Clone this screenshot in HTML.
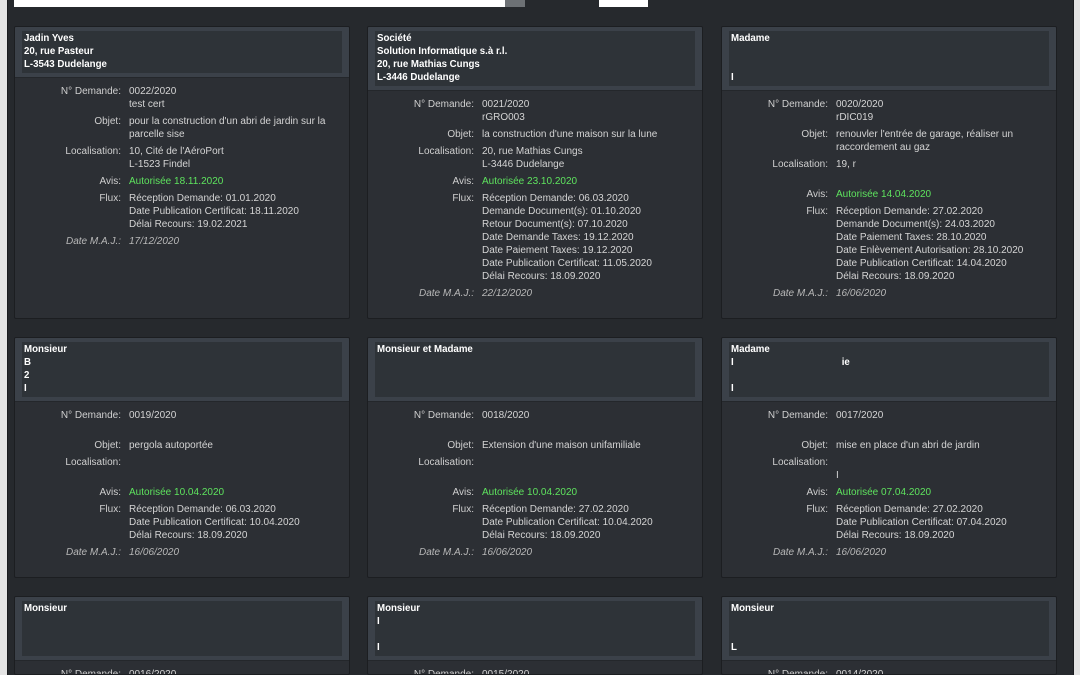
<!DOCTYPE html>
<html style="height:675px;overflow:hidden"><head><meta charset="utf-8"><style>
*{margin:0;padding:0;box-sizing:border-box}
body{width:1080px;height:675px;overflow:hidden;background:#26292d;font-family:"Liberation Sans",Arial,sans-serif;font-size:10px;color:#d0d0d0;position:relative}
.ls{position:absolute;left:0;top:0;width:8px;height:675px;background:#e4e4e4;border-right:1px solid #1a1c1f}
.rs{position:absolute;left:1073px;top:0;width:7px;height:675px;background:#e4e4e4;border-left:1px solid #1a1c1f}
.inp{position:absolute;left:14px;top:0;width:491px;height:7px;background:#fff}
.btn{position:absolute;left:505px;top:0;width:20px;height:7px;background:#6d7175}
.box{position:absolute;left:599px;top:0;width:49px;height:7px;background:#fff}
.card{position:absolute;width:336px;background:#2c2f34;border:1px solid #1c1e21;border-radius:2px;overflow:hidden}
.hd{background:#3b4149;padding:4px 7px 4px;border-bottom:1px solid #24272b}
.hi{background:#2e3338;padding:1px 2px 2px;line-height:13px;font-weight:bold;color:#fff;font-size:9.7px}
.bd{padding:7px 0 0 0}
.f{display:flex;line-height:13px;margin-bottom:4px}
.l{width:114px;text-align:right;padding-right:8px;color:#cfcfcf;flex:none}
.v{color:#d4d4d4}
.g{color:#5ee35e}
.i{font-style:italic;color:#b8b8b8}
</style></head><body>
<div class="ls"></div><div class="rs"></div>
<div class="inp"></div><div class="btn"></div><div class="box"></div>

<div class="card" style="left:14px;top:26px;height:293px">
<div class="hd"><div class="hi">Jadin Yves<br>20, rue Pasteur<br>L-3543 Dudelange</div></div>
<div class="bd">
<div class="f"><div class="l">N° Demande:</div><div class="v">0022/2020<br>test cert</div></div>
<div class="f"><div class="l">Objet:</div><div class="v">pour la construction d'un abri de jardin sur la<br>parcelle sise</div></div>
<div class="f"><div class="l">Localisation:</div><div class="v">10, Cité de l'AéroPort<br>L-1523 Findel</div></div>
<div class="f"><div class="l">Avis:</div><div class="v g">Autorisée 18.11.2020</div></div>
<div class="f"><div class="l">Flux:</div><div class="v">Réception Demande: 01.01.2020<br>Date Publication Certificat: 18.11.2020<br>Délai Recours: 19.02.2021</div></div>
<div class="f"><div class="l i">Date M.A.J.:</div><div class="v i">17/12/2020</div></div>
</div></div>

<div class="card" style="left:367px;top:26px;height:293px">
<div class="hd"><div class="hi">Société<br>Solution Informatique s.à r.l.<br>20, rue Mathias Cungs<br>L-3446 Dudelange</div></div>
<div class="bd">
<div class="f"><div class="l">N° Demande:</div><div class="v">0021/2020<br>rGRO003</div></div>
<div class="f"><div class="l">Objet:</div><div class="v">la construction d'une maison sur la lune</div></div>
<div class="f"><div class="l">Localisation:</div><div class="v">20, rue Mathias Cungs<br>L-3446 Dudelange</div></div>
<div class="f"><div class="l">Avis:</div><div class="v g">Autorisée 23.10.2020</div></div>
<div class="f"><div class="l">Flux:</div><div class="v">Réception Demande: 06.03.2020<br>Demande Document(s): 01.10.2020<br>Retour Document(s): 07.10.2020<br>Date Demande Taxes: 19.12.2020<br>Date Paiement Taxes: 19.12.2020<br>Date Publication Certificat: 11.05.2020<br>Délai Recours: 18.09.2020</div></div>
<div class="f"><div class="l i">Date M.A.J.:</div><div class="v i">22/12/2020</div></div>
</div></div>

<div class="card" style="left:721px;top:26px;height:293px">
<div class="hd"><div class="hi">Madame<br>&nbsp;<br>&nbsp;<br>I</div></div>
<div class="bd">
<div class="f"><div class="l">N° Demande:</div><div class="v">0020/2020<br>rDIC019</div></div>
<div class="f"><div class="l">Objet:</div><div class="v">renouvler l'entrée de garage, réaliser un<br>raccordement au gaz</div></div>
<div class="f"><div class="l">Localisation:</div><div class="v">19, r<br>&nbsp;</div></div>
<div class="f"><div class="l">Avis:</div><div class="v g">Autorisée 14.04.2020</div></div>
<div class="f"><div class="l">Flux:</div><div class="v">Réception Demande: 27.02.2020<br>Demande Document(s): 24.03.2020<br>Date Paiement Taxes: 28.10.2020<br>Date Enlèvement Autorisation: 28.10.2020<br>Date Publication Certificat: 14.04.2020<br>Délai Recours: 18.09.2020</div></div>
<div class="f"><div class="l i">Date M.A.J.:</div><div class="v i">16/06/2020</div></div>
</div></div>

<div class="card" style="left:14px;top:337px;height:241px">
<div class="hd"><div class="hi">Monsieur<br>B<br>2<br>I</div></div>
<div class="bd">
<div class="f"><div class="l">N° Demande:</div><div class="v">0019/2020<br>&nbsp;</div></div>
<div class="f"><div class="l">Objet:</div><div class="v">pergola autoportée</div></div>
<div class="f"><div class="l">Localisation:</div><div class="v">&nbsp;<br>&nbsp;</div></div>
<div class="f"><div class="l">Avis:</div><div class="v g">Autorisée 10.04.2020</div></div>
<div class="f"><div class="l">Flux:</div><div class="v">Réception Demande: 06.03.2020<br>Date Publication Certificat: 10.04.2020<br>Délai Recours: 18.09.2020</div></div>
<div class="f"><div class="l i">Date M.A.J.:</div><div class="v i">16/06/2020</div></div>
</div></div>

<div class="card" style="left:367px;top:337px;height:241px">
<div class="hd"><div class="hi">Monsieur et Madame<br>&nbsp;<br>&nbsp;<br>&nbsp;</div></div>
<div class="bd">
<div class="f"><div class="l">N° Demande:</div><div class="v">0018/2020<br>&nbsp;</div></div>
<div class="f"><div class="l">Objet:</div><div class="v">Extension d'une maison unifamiliale</div></div>
<div class="f"><div class="l">Localisation:</div><div class="v">&nbsp;<br>&nbsp;</div></div>
<div class="f"><div class="l">Avis:</div><div class="v g">Autorisée 10.04.2020</div></div>
<div class="f"><div class="l">Flux:</div><div class="v">Réception Demande: 27.02.2020<br>Date Publication Certificat: 10.04.2020<br>Délai Recours: 18.09.2020</div></div>
<div class="f"><div class="l i">Date M.A.J.:</div><div class="v i">16/06/2020</div></div>
</div></div>

<div class="card" style="left:721px;top:337px;height:241px">
<div class="hd"><div class="hi">Madame<br>I<span style="padding-left:108px">ie</span><br>&nbsp;<br>I</div></div>
<div class="bd">
<div class="f"><div class="l">N° Demande:</div><div class="v">0017/2020<br>&nbsp;</div></div>
<div class="f"><div class="l">Objet:</div><div class="v">mise en place d'un abri de jardin</div></div>
<div class="f"><div class="l">Localisation:</div><div class="v">&nbsp;<br>I</div></div>
<div class="f"><div class="l">Avis:</div><div class="v g">Autorisée 07.04.2020</div></div>
<div class="f"><div class="l">Flux:</div><div class="v">Réception Demande: 27.02.2020<br>Date Publication Certificat: 07.04.2020<br>Délai Recours: 18.09.2020</div></div>
<div class="f"><div class="l i">Date M.A.J.:</div><div class="v i">16/06/2020</div></div>
</div></div>

<div class="card" style="left:14px;top:596px;height:79px">
<div class="hd"><div class="hi">Monsieur<br>&nbsp;<br>&nbsp;<br>&nbsp;</div></div>
<div class="bd"><div class="f"><div class="l">N° Demande:</div><div class="v">0016/2020</div></div></div></div>

<div class="card" style="left:367px;top:596px;height:79px">
<div class="hd"><div class="hi">Monsieur<br>I<br>&nbsp;<br>I</div></div>
<div class="bd"><div class="f"><div class="l">N° Demande:</div><div class="v">0015/2020</div></div></div></div>

<div class="card" style="left:721px;top:596px;height:79px">
<div class="hd"><div class="hi">Monsieur<br>&nbsp;<br>&nbsp;<br>L</div></div>
<div class="bd"><div class="f"><div class="l">N° Demande:</div><div class="v">0014/2020</div></div></div></div>
</body></html>
